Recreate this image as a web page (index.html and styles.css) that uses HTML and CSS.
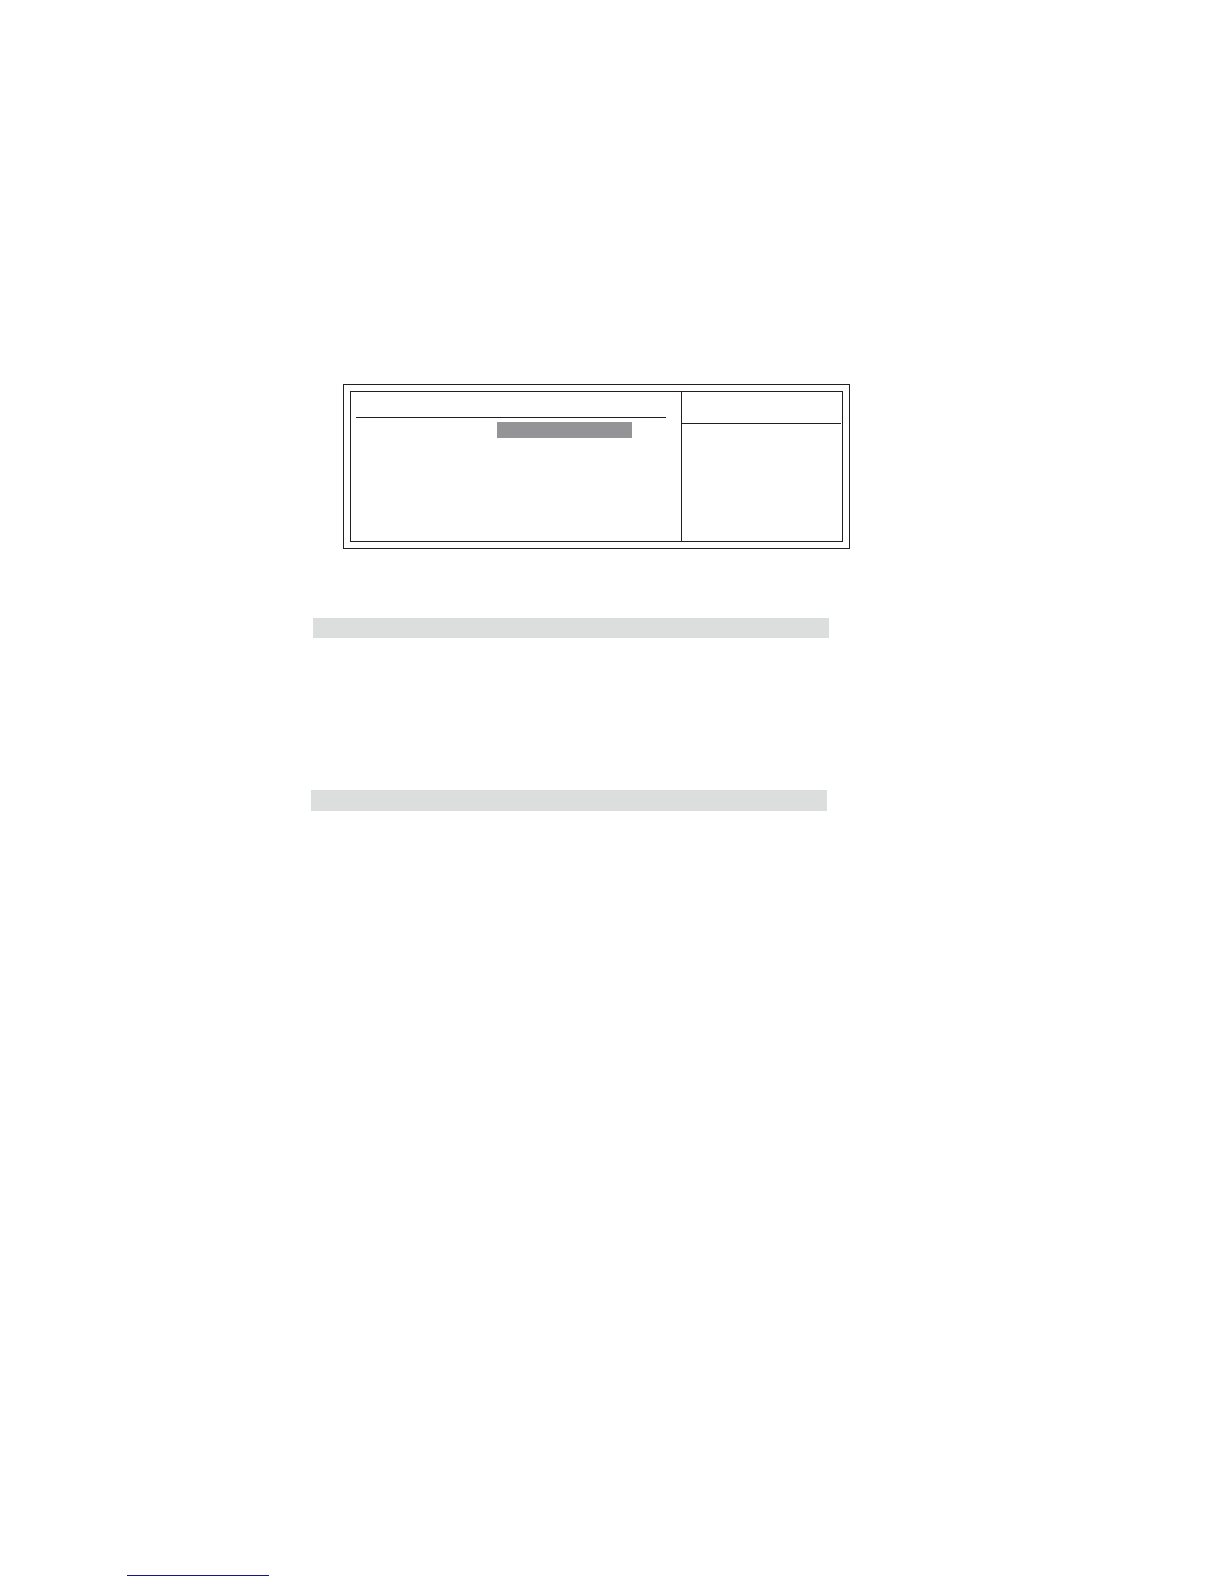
FILE: index.html
```html
<!DOCTYPE html>
<html lang="en">
<head>
    <meta charset="UTF-8">
    <meta name="viewport" content="width=device-width, initial-scale=1.0">
    <title>Setup</title>
    <link rel="stylesheet" href="styles.css">
</head>
<body>
    <main class="content">
        <section class="panel">
            <div class="panel-inner">
                <div class="settings">
                    <div class="settings-header"></div>
                    <div class="selected"></div>
                </div>
                <div class="help">
                    <div class="help-header"></div>
                </div>
            </div>
        </section>

        <div class="bar bar-first"></div>
        <div class="bar bar-second"></div>
    </main>

    <footer class="footer">
        <div class="footer-line"></div>
    </footer>
</body>
</html>
```

FILE: styles.css
```css
* {
    box-sizing: border-box;
}

body {
    background-color: #ffffff;
    display: flex;
    flex-direction: column;
    min-height: 100vh;
    margin: 0;
}

.content {
    width: 100%;
    max-width: 850px;
    padding: 384px 0 0 311px;
}

/* Double framed panel */
.panel {
    margin-left: 32px;
    padding: 6px;
    border: 1px solid #231f20;
}

.panel-inner {
    display: flex;
    min-height: 151px;
    border: 1px solid #231f20;
}

.settings {
    flex: 1;
    padding: 0 15px 0 5px;
}

.settings-header {
    height: 26px;
    border-bottom: 1px solid #231f20;
}

.selected {
    width: 135px;
    height: 16px;
    margin: 4px 34px 0 auto;
    background-color: #949496;
}

.help {
    width: 161px;
    padding-right: 1px;
    border-left: 1px solid #231f20;
}

.help-header {
    height: 32px;
    border-bottom: 1px solid #231f20;
}

/* Section bars */
.bar {
    max-width: 516px;
    background-color: #dcdddd;
}

.bar-first {
    height: 20px;
    margin: 69px 0 0 2px;
}

.bar-second {
    height: 21px;
    margin-top: 152px;
}

.footer {
    margin-top: auto;
    padding: 0 127px 8px;
}

.footer-line {
    max-width: 142px;
    border-bottom: 1px solid #14148c;
}
```
